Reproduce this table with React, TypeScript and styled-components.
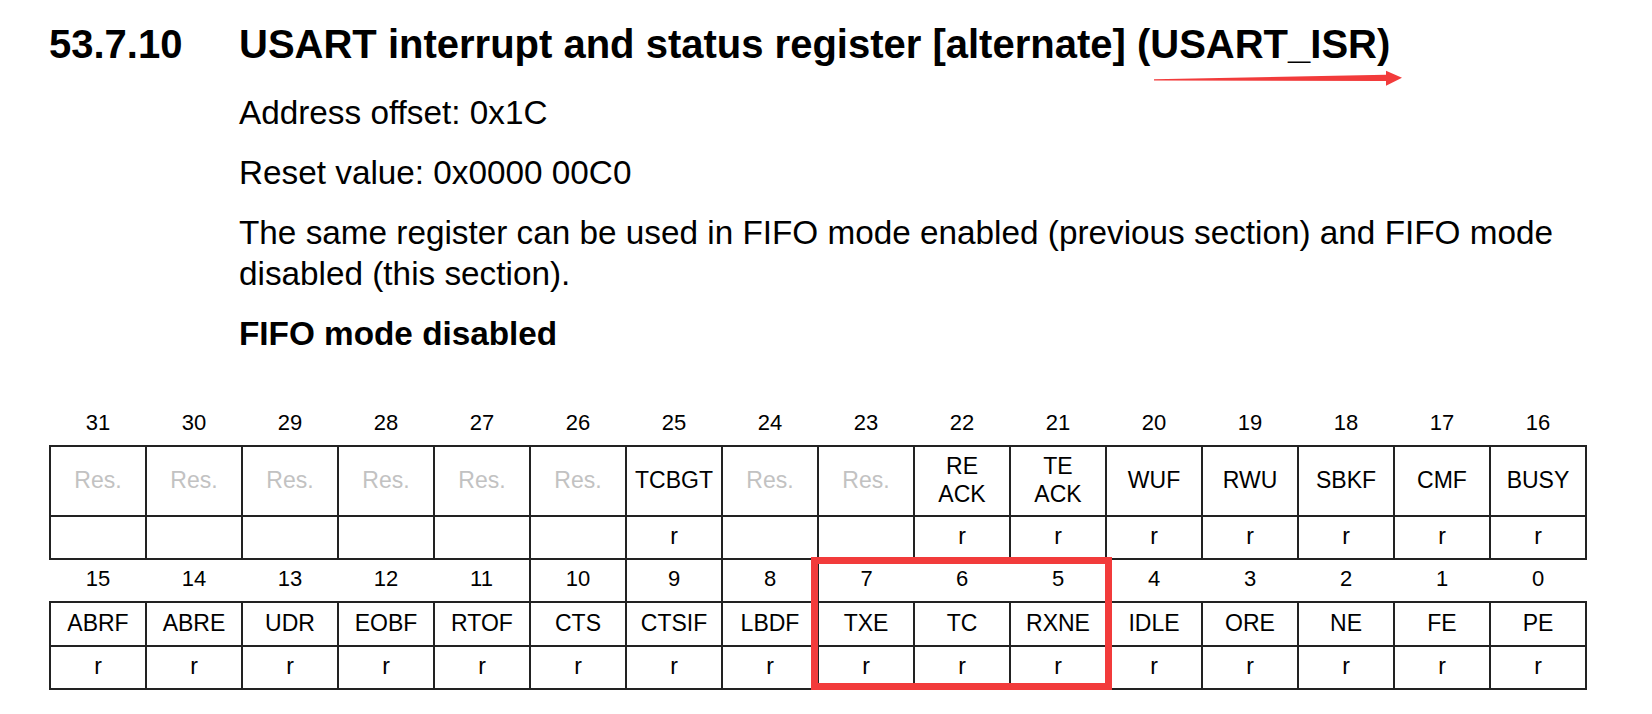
import React from "react";
import styled, { createGlobalStyle } from "styled-components";

const GlobalStyle = createGlobalStyle`
  html, body {
    margin: 0;
    padding: 0;
    background: #ffffff;
  }
`;

type Field = { name: string; access: string };

const RES: Field = { name: "Res.", access: "" };
const R = (name: string): Field => ({ name, access: "r" });

const high: Field[] = [
  RES, RES, RES, RES, RES, RES,
  R("TCBGT"), RES, RES,
  R("RE\nACK"), R("TE\nACK"),
  R("WUF"), R("RWU"), R("SBKF"), R("CMF"), R("BUSY"),
];

const low: Field[] = [
  "ABRF", "ABRE", "UDR", "EOBF", "RTOF", "CTS", "CTSIF", "LBDF",
  "TXE", "TC", "RXNE", "IDLE", "ORE", "NE", "FE", "PE",
].map(R);

// bit numbers in the lower row that sit inside a little box in the pdf
const boxedBits = [10, 9, 8];

const App = () => {
  return (
    <>
      <GlobalStyle />
      <S.Page>
        <S.Heading>
          <span className="num">53.7.10</span>
          <span>USART interrupt and status register [alternate] (USART_ISR)</span>
        </S.Heading>
        <S.Arrow width="260" height="26" viewBox="0 0 260 26">
          <polygon
            points="4,14.3 236,9.7 236,5.7 252,12.7 236,20.7 236,16 4,15.6"
            fill="#f23b3b"
          />
        </S.Arrow>

        <S.Body>
          <S.Para>Address offset: 0x1C</S.Para>
          <S.Para>Reset value: 0x0000 00C0</S.Para>
          <S.Para>
            The same register can be used in FIFO mode enabled (previous
            section) and FIFO mode disabled (this section).
          </S.Para>
          <S.Para $bold>FIFO mode disabled</S.Para>
        </S.Body>

        <S.TableWrap>
          <S.Table>
            <tbody>
              <S.NumRow>
                {high.map((_, i) => (
                  <S.Num key={i}>{31 - i}</S.Num>
                ))}
              </S.NumRow>
              <S.NameRow $tall>
                {high.map((f, i) => (
                  <S.Cell key={i} $reserved={f.name === "Res."}>
                    {f.name}
                  </S.Cell>
                ))}
              </S.NameRow>
              <S.AccessRow>
                {high.map((f, i) => (
                  <S.Cell key={i}>{f.access}</S.Cell>
                ))}
              </S.AccessRow>
              <S.NumRow>
                {low.map((_, i) => (
                  <S.Num key={i} $boxed={boxedBits.includes(15 - i)}>
                    {15 - i}
                  </S.Num>
                ))}
              </S.NumRow>
              <S.NameRow>
                {low.map((f, i) => (
                  <S.Cell key={i}>{f.name}</S.Cell>
                ))}
              </S.NameRow>
              <S.AccessRow>
                {low.map((f, i) => (
                  <S.Cell key={i}>{f.access}</S.Cell>
                ))}
              </S.AccessRow>
            </tbody>
          </S.Table>
          <S.Highlight />
        </S.TableWrap>
      </S.Page>
    </>
  );
};

export default App;

const S = {
  Page: styled.div`
    position: relative;
    width: 1652px;
    height: 714px;
    box-sizing: border-box;
    padding: 21px 0 0 49px;
    font-family: "Liberation Sans", Arial, Helvetica, sans-serif;
    color: #000;
    overflow: hidden;
  `,
  Heading: styled.h1`
    display: flex;
    margin: 0;
    font-size: 40px;
    line-height: 46px;
    font-weight: bold;
    .num {
      width: 190px;
      flex: none;
    }
  `,
  Arrow: styled.svg`
    position: absolute;
    left: 1150px;
    top: 65px;
  `,
  Body: styled.div`
    margin-left: 190px;
    width: 1360px;
    padding-top: 6px;
  `,
  Para: styled.p<{ $bold?: boolean }>`
    margin: 19px 0 0;
    font-size: 33.3px;
    line-height: 41px;
    font-weight: ${(p) => (p.$bold ? "bold" : "normal")};
  `,
  TableWrap: styled.div`
    position: relative;
    width: 1536px;
    margin-top: 49px;
  `,
  Table: styled.table`
    width: 1536px;
    table-layout: fixed;
    border-collapse: collapse;
    font-size: 23px;
    td {
      width: 96px;
      padding: 0 0 3px;
      text-align: center;
      vertical-align: middle;
    }
  `,
  NumRow: styled.tr`
    height: 43px;
  `,
  NameRow: styled.tr<{ $tall?: boolean }>`
    height: ${(p) => (p.$tall ? "70px" : "44px")};
  `,
  AccessRow: styled.tr`
    height: 43px;
  `,
  Num: styled.td<{ $boxed?: boolean }>`
    font-size: 22px;
    border-left: ${(p) => (p.$boxed ? "2px solid #222" : "none")};
    border-right: ${(p) => (p.$boxed ? "2px solid #222" : "none")};
  `,
  Cell: styled.td<{ $reserved?: boolean }>`
    border: 2px solid #222;
    white-space: pre-line;
    line-height: 28px;
    color: ${(p) => (p.$reserved ? "#c2c2c2" : "#000")};
  `,
  Highlight: styled.div`
    position: absolute;
    left: 762px;
    top: 154px;
    width: 301px;
    height: 133px;
    box-sizing: border-box;
    border: 7px solid #f23b3b;
    pointer-events: none;
  `,
};
